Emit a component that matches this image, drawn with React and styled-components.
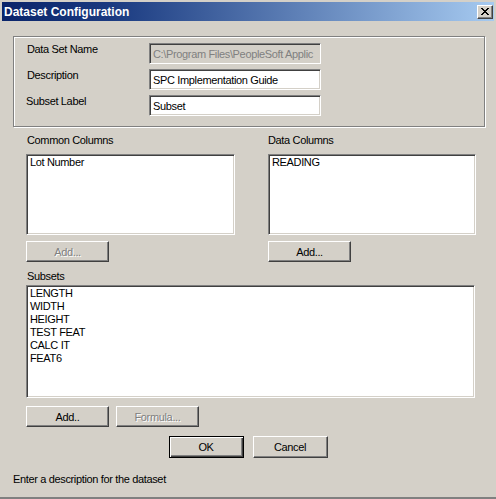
import React from "react";
import styled, { createGlobalStyle, css } from "styled-components";

const Global = createGlobalStyle`
  html, body { margin: 0; padding: 0; background: #d4d0c8; }
  * { box-sizing: border-box; }
`;

const Window = styled.div`
  width: 496px;
  height: 499px;
  background: #d4d0c8;
  padding: 2px 2px 0 2px;
  border-bottom: 2px solid #808080;
  display: flex;
  flex-direction: column;
  font-family: "Liberation Sans", Arial, sans-serif;
  font-size: 11px;
  letter-spacing: -0.35px;
  color: #000;
  overflow: hidden;
`;

const TitleBar = styled.div`
  height: 19px;
  flex: none;
  background: linear-gradient(to right, #0a246a 0%, #1a3a80 22%, #a6caf0 100%);
  display: flex;
  align-items: center;
  justify-content: space-between;
  padding: 0 1px 0 2px;
`;

const Title = styled.span`
  color: #fff;
  font-weight: bold;
  font-size: 12px;
  letter-spacing: 0;
`;

const CloseButton = styled.div`
  width: 16px;
  height: 14px;
  background: #d4d0c8;
  border: 1px solid;
  border-color: #fff #404040 #404040 #fff;
  box-shadow: inset -1px -1px #808080;
  display: flex;
  align-items: center;
  justify-content: center;
  padding-right: 1px;
`;

const Group = styled.div`
  margin: 15px 9px 0 11px;
  padding: 6px 0 10px 13px;
  border: 1px solid #808080;
  box-shadow: inset 1px 1px #fff, 1px 1px #fff;
  display: grid;
  grid-template-columns: 122px 172px;
  row-gap: 5px;
`;

const Label = styled.div`
  line-height: 13px;
  white-space: nowrap;
  margin-left: ${(p) => p.$shift || 0}px;
`;

const sunken = css`
  border: 1px solid;
  border-color: #808080 #fff #fff #808080;
  box-shadow: inset 1px 1px #404040, inset -1px -1px #d4d0c8;
`;

const TextField = styled.div`
  ${sunken}
  height: 21px;
  padding: 0 3px;
  display: flex;
  align-items: center;
  white-space: nowrap;
  overflow: hidden;
  background: ${(p) => (p.$disabled ? "#d4d0c8" : "#fff")};
  color: ${(p) => (p.$disabled ? "#808080" : "#000")};
`;

const Section = styled.div`
  padding-left: 24px;
`;

const ColumnsRow = styled.div`
  margin-top: 7px;
  display: grid;
  grid-template-columns: 209px 208px;
  column-gap: 33px;
`;

const Column = styled.div`
  display: flex;
  flex-direction: column;
  align-items: flex-start;
`;

const ListBox = styled.div`
  ${sunken}
  background: #fff;
  width: ${(p) => p.$w}px;
  height: ${(p) => p.$h}px;
  margin-top: ${(p) => p.$mt}px;
  padding: 1px 3px;
  line-height: 13px;
`;

const Button = styled.div`
  width: ${(p) => p.$w || 83}px;
  height: ${(p) => p.$h || 21}px;
  background: #d4d0c8;
  border: 1px solid;
  border-color: #fff #404040 #404040 #fff;
  box-shadow: inset -1px -1px #808080;
  display: flex;
  align-items: center;
  justify-content: center;
  color: ${(p) => (p.$disabled ? "#808080" : "#000")};
  text-shadow: ${(p) => (p.$disabled ? "1px 1px #fff" : "none")};
  ${(p) =>
    p.$default &&
    css`
      border: 1px solid #000;
      box-shadow: inset 1px 1px #fff, inset -1px -1px #404040, inset -2px -2px #808080;
    `}
`;

const ButtonSpacer = styled.div`
  margin-top: ${(p) => p.$mt}px;
`;

const SubsetsLabel = styled(Label)`
  margin-top: 8px;
  margin-left: 1px;
`;

const ButtonRow = styled.div`
  display: flex;
  gap: ${(p) => p.$gap}px;
  margin-top: ${(p) => p.$mt}px;
  justify-content: ${(p) => (p.$center ? "center" : "flex-start")};
`;

const Status = styled.div`
  margin-top: 15px;
  padding-left: 11px;
  line-height: 13px;
`;

const closeRows = [
  "XX....XX",
  ".XX..XX.",
  "..XXXX..",
  "...XX...",
  "..XXXX..",
  ".XX..XX.",
  "XX....XX",
];

function CloseGlyph() {
  const rects = [];
  closeRows.forEach((row, y) =>
    row.split("").forEach((c, x) => {
      if (c === "X") rects.push(<rect key={`${x}-${y}`} x={x} y={y} width="1" height="1" />);
    })
  );
  return (
    <svg width="8" height="7" viewBox="0 0 8 7" shapeRendering="crispEdges" fill="#000">
      {rects}
    </svg>
  );
}

const subsets = ["LENGTH", "WIDTH", "HEIGHT", "TEST FEAT", "CALC IT", "FEAT6"];

export default function App() {
  return (
    <>
      <Global />
      <Window>
        <TitleBar>
          <Title>Dataset Configuration</Title>
          <CloseButton>
            <CloseGlyph />
          </CloseButton>
        </TitleBar>

        <Group>
          <Label>Data Set Name</Label>
          <TextField $disabled>C:\Program Files\PeopleSoft Applic</TextField>
          <Label>Description</Label>
          <TextField>SPC Implementation Guide</TextField>
          <Label $shift={-1}>Subset Label</Label>
          <TextField>Subset</TextField>
        </Group>

        <Section>
          <ColumnsRow>
            <Column>
              <Label $shift={1}>Common Columns</Label>
              <ListBox $w={209} $h={81} $mt={7}>Lot Number</ListBox>
              <ButtonSpacer $mt={6}>
                <Button $disabled>Add...</Button>
              </ButtonSpacer>
            </Column>
            <Column>
              <Label>Data Columns</Label>
              <ListBox $w={208} $h={81} $mt={7}>READING</ListBox>
              <ButtonSpacer $mt={6}>
                <Button>Add...</Button>
              </ButtonSpacer>
            </Column>
          </ColumnsRow>

          <SubsetsLabel>Subsets</SubsetsLabel>
          <ListBox $w={449} $h={113} $mt={2}>
            {subsets.map((s) => (
              <div key={s}>{s}</div>
            ))}
          </ListBox>
          <ButtonRow $gap={7} $mt={8}>
            <Button>Add..</Button>
            <Button $disabled>Formula...</Button>
          </ButtonRow>
        </Section>

        <ButtonRow $gap={9} $mt={9} $center>
          <Button $w={75} $h={22} $default>OK</Button>
          <Button $w={75} $h={22}>Cancel</Button>
        </ButtonRow>

        <Status>Enter a description for the dataset</Status>
      </Window>
    </>
  );
}
